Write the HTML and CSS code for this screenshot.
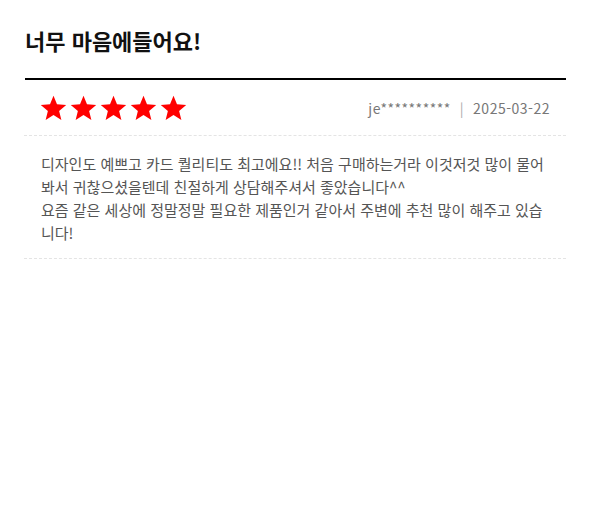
FILE: index.html
```html
<!DOCTYPE html>
<html lang="ko">
<head>
<meta charset="utf-8">
<link rel="stylesheet" href="styles.css">
</head>
<body>
<div class="review">
  <h2 class="title">너무 마음에들어요!</h2>
  <div class="head">
    <div class="stars">
      <svg viewBox="0 0 24 24"><path d="M12 1.5l3.1 7.6 8.2.6-6.3 5.3 2 8-7-4.4-7 4.4 2-8L.7 9.7l8.2-.6z"/></svg>
      <svg viewBox="0 0 24 24"><path d="M12 1.5l3.1 7.6 8.2.6-6.3 5.3 2 8-7-4.4-7 4.4 2-8L.7 9.7l8.2-.6z"/></svg>
      <svg viewBox="0 0 24 24"><path d="M12 1.5l3.1 7.6 8.2.6-6.3 5.3 2 8-7-4.4-7 4.4 2-8L.7 9.7l8.2-.6z"/></svg>
      <svg viewBox="0 0 24 24"><path d="M12 1.5l3.1 7.6 8.2.6-6.3 5.3 2 8-7-4.4-7 4.4 2-8L.7 9.7l8.2-.6z"/></svg>
      <svg viewBox="0 0 24 24"><path d="M12 1.5l3.1 7.6 8.2.6-6.3 5.3 2 8-7-4.4-7 4.4 2-8L.7 9.7l8.2-.6z"/></svg>
    </div>
    <div class="meta"><span>je**********</span><span class="sep">|</span><span>2025-03-22</span></div>
  </div>
  <div class="body">디자인도 예쁘고 카드 퀄리티도 최고에요!! 처음 구매하는거라 이것저것 많이 물어봐서 귀찮으셨을텐데 친절하게 상담해주셔서 좋았습니다^^<br>요즘 같은 세상에 정말정말 필요한 제품인거 같아서 주변에 추천 많이 해주고 있습니다!</div>
</div>
</body>
</html>
```

FILE: styles.css
```css
html, body {
  margin: 0;
  padding: 0;
  background: #fff;
}
body {
  font-family: "Noto Sans CJK KR", "Noto Sans", sans-serif;
}
.review {
  margin: 0 25px 0 24px;
  padding-top: 24px;
}
.title {
  margin: 0 0 0 1px;
  font-size: 22px;
  font-weight: 700;
  letter-spacing: 0;
  line-height: 32px;
  color: #111;
  padding-bottom: 22px;
  border-bottom: 2px solid #000;
}
.head {
  display: flex;
  align-items: center;
  justify-content: space-between;
  padding: 14px 16px 14px 16px;
  border-bottom: 1px dashed #e4e4e4;
}
.stars {
  display: flex;
  gap: 3px;
}
.stars svg {
  width: 27px;
  height: 27px;
  fill: #ff0000;
  display: block;
}
.meta {
  font-size: 14px;
  color: #777;
  display: flex;
  align-items: center;
  letter-spacing: 0.5px;
}
.sep {
  margin: 0 9px;
  color: #aaa;
}
.body {
  padding: 16px 16px 14px 17px;
  font-size: 15px;
  line-height: 23px;
  color: #555;
  letter-spacing: 0;
  border-bottom: 1px dashed #e4e4e4;
}
```
